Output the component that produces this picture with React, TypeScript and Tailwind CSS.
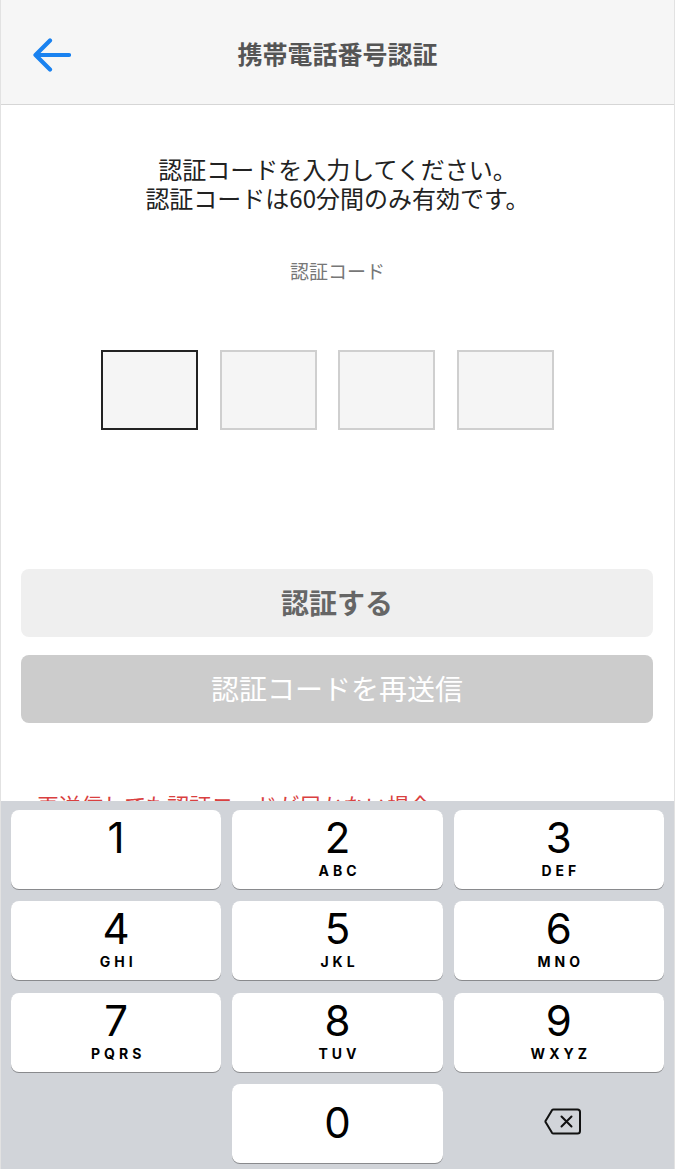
import React from "react";

const jp = { fontFamily: '"Noto Sans CJK JP", "Noto Sans", sans-serif' };
const num = { fontFamily: 'Inter, "Liberation Sans", Arial, sans-serif' };

const keys: { digit: string; letters: string }[] = [
  { digit: "1", letters: "" },
  { digit: "2", letters: "ABC" },
  { digit: "3", letters: "DEF" },
  { digit: "4", letters: "GHI" },
  { digit: "5", letters: "JKL" },
  { digit: "6", letters: "MNO" },
  { digit: "7", letters: "PQRS" },
  { digit: "8", letters: "TUV" },
  { digit: "9", letters: "WXYZ" },
];

function BackArrow() {
  return (
    <svg width="40" height="36" viewBox="0 0 40 36" fill="none">
      <path d="M38 18H5M19 3.5L4.5 18L19 32.5" stroke="#1a82f0" strokeWidth="4.2" strokeLinecap="round" strokeLinejoin="round" />
    </svg>
  );
}

function DeleteIcon() {
  return (
    <svg width="38" height="27" viewBox="0 0 38 27" fill="none">
      <path
        d="M9.5 1.5H33.5a2.5 2.5 0 0 1 2.5 2.5V23a2.5 2.5 0 0 1-2.5 2.5H9.5a2 2 0 0 1-1.5-0.7L2 14.8a2 2 0 0 1 0-2.6L8 2.2a2 2 0 0 1 1.5-0.7Z"
        stroke="#111"
        strokeWidth="2"
        strokeLinejoin="round"
      />
      <path d="M17.5 8.5L27.5 18.5M27.5 8.5L17.5 18.5" stroke="#111" strokeWidth="2" strokeLinecap="round" />
    </svg>
  );
}

function Key({ digit, letters }: { digit: string; letters: string }) {
  return (
    <div className="flex flex-col items-center rounded-[8px] bg-white pt-[7px] shadow-[0_1px_0_#898a8d]" style={num}>
      <span className="text-[42px] font-normal leading-[42px] text-black">{digit}</span>
      <span className="mt-[5px] pl-[4px] text-[14px] font-bold leading-[14px] tracking-[4px] text-black">{letters}</span>
    </div>
  );
}

export default function App() {
  return (
    <div className="relative h-[1169px] w-full overflow-hidden border-x border-[#e2e2e2] bg-white" style={jp}>
      <header className="grid h-[105px] grid-cols-[80px_1fr_80px] items-center border-b border-[#d6d6d6] bg-[#f6f6f6] pt-[8px]">
        <div className="pl-[30px] pb-[2px]">
          <BackArrow />
        </div>
        <h1 className="pb-[4px] text-center text-[25px] font-bold text-[#555]">携帯電話番号認証</h1>
        <div />
      </header>

      <div className="mt-[49px] text-center text-[24px] leading-[29px] text-[#222]">
        <p>認証コードを入力してください。</p>
        <p>認証コードは60分間のみ有効です。</p>
      </div>

      <p className="mt-[47px] text-center text-[19px] leading-[24px] text-[#777]">認証コード</p>

      <div className="mt-[67px] flex gap-[21.5px] pl-[100px]">
        <div className="h-[80px] w-[97px] border-2 border-[#222] bg-[#f5f5f5]" />
        <div className="h-[80px] w-[97px] border-2 border-[#cfcfcf] bg-[#f5f5f5]" />
        <div className="h-[80px] w-[97px] border-2 border-[#cfcfcf] bg-[#f5f5f5]" />
        <div className="h-[80px] w-[97px] border-2 border-[#cfcfcf] bg-[#f5f5f5]" />
      </div>

      <div className="mt-[139px] flex flex-col gap-[18px] pl-[20px] pr-[21px]">
        <button className="flex h-[68px] items-center justify-center rounded-[8px] bg-[#efefef] pb-[2px] text-[28px] font-bold text-[#666]">
          認証する
        </button>
        <button className="flex h-[68px] items-center justify-center rounded-[8px] bg-[#cccccc] pb-[2px] text-[28px] font-normal text-white">
          認証コードを再送信
        </button>
      </div>

      <p className="mt-[66px] pl-[36px] text-[22px] leading-[30px] text-[#d94040]">再送信しても認証コードが届かない場合</p>

      <div className="absolute inset-x-0 bottom-0 h-[368px] bg-[#d1d4d9] px-[10px] pt-[9px]">
        <div className="grid grid-cols-3 auto-rows-[79px] gap-x-[11px] gap-y-[12.3px]">
          {keys.map((k) => (
            <Key key={k.digit} digit={k.digit} letters={k.letters} />
          ))}
          <div />
          <div className="flex items-center justify-center rounded-[8px] bg-white shadow-[0_1px_0_#898a8d]" style={num}>
            <span className="pb-[1px] text-[42px] leading-[42px] text-black">0</span>
          </div>
          <div className="flex items-center justify-center pl-[8px] pb-[3px]">
            <DeleteIcon />
          </div>
        </div>
      </div>
    </div>
  );
}
